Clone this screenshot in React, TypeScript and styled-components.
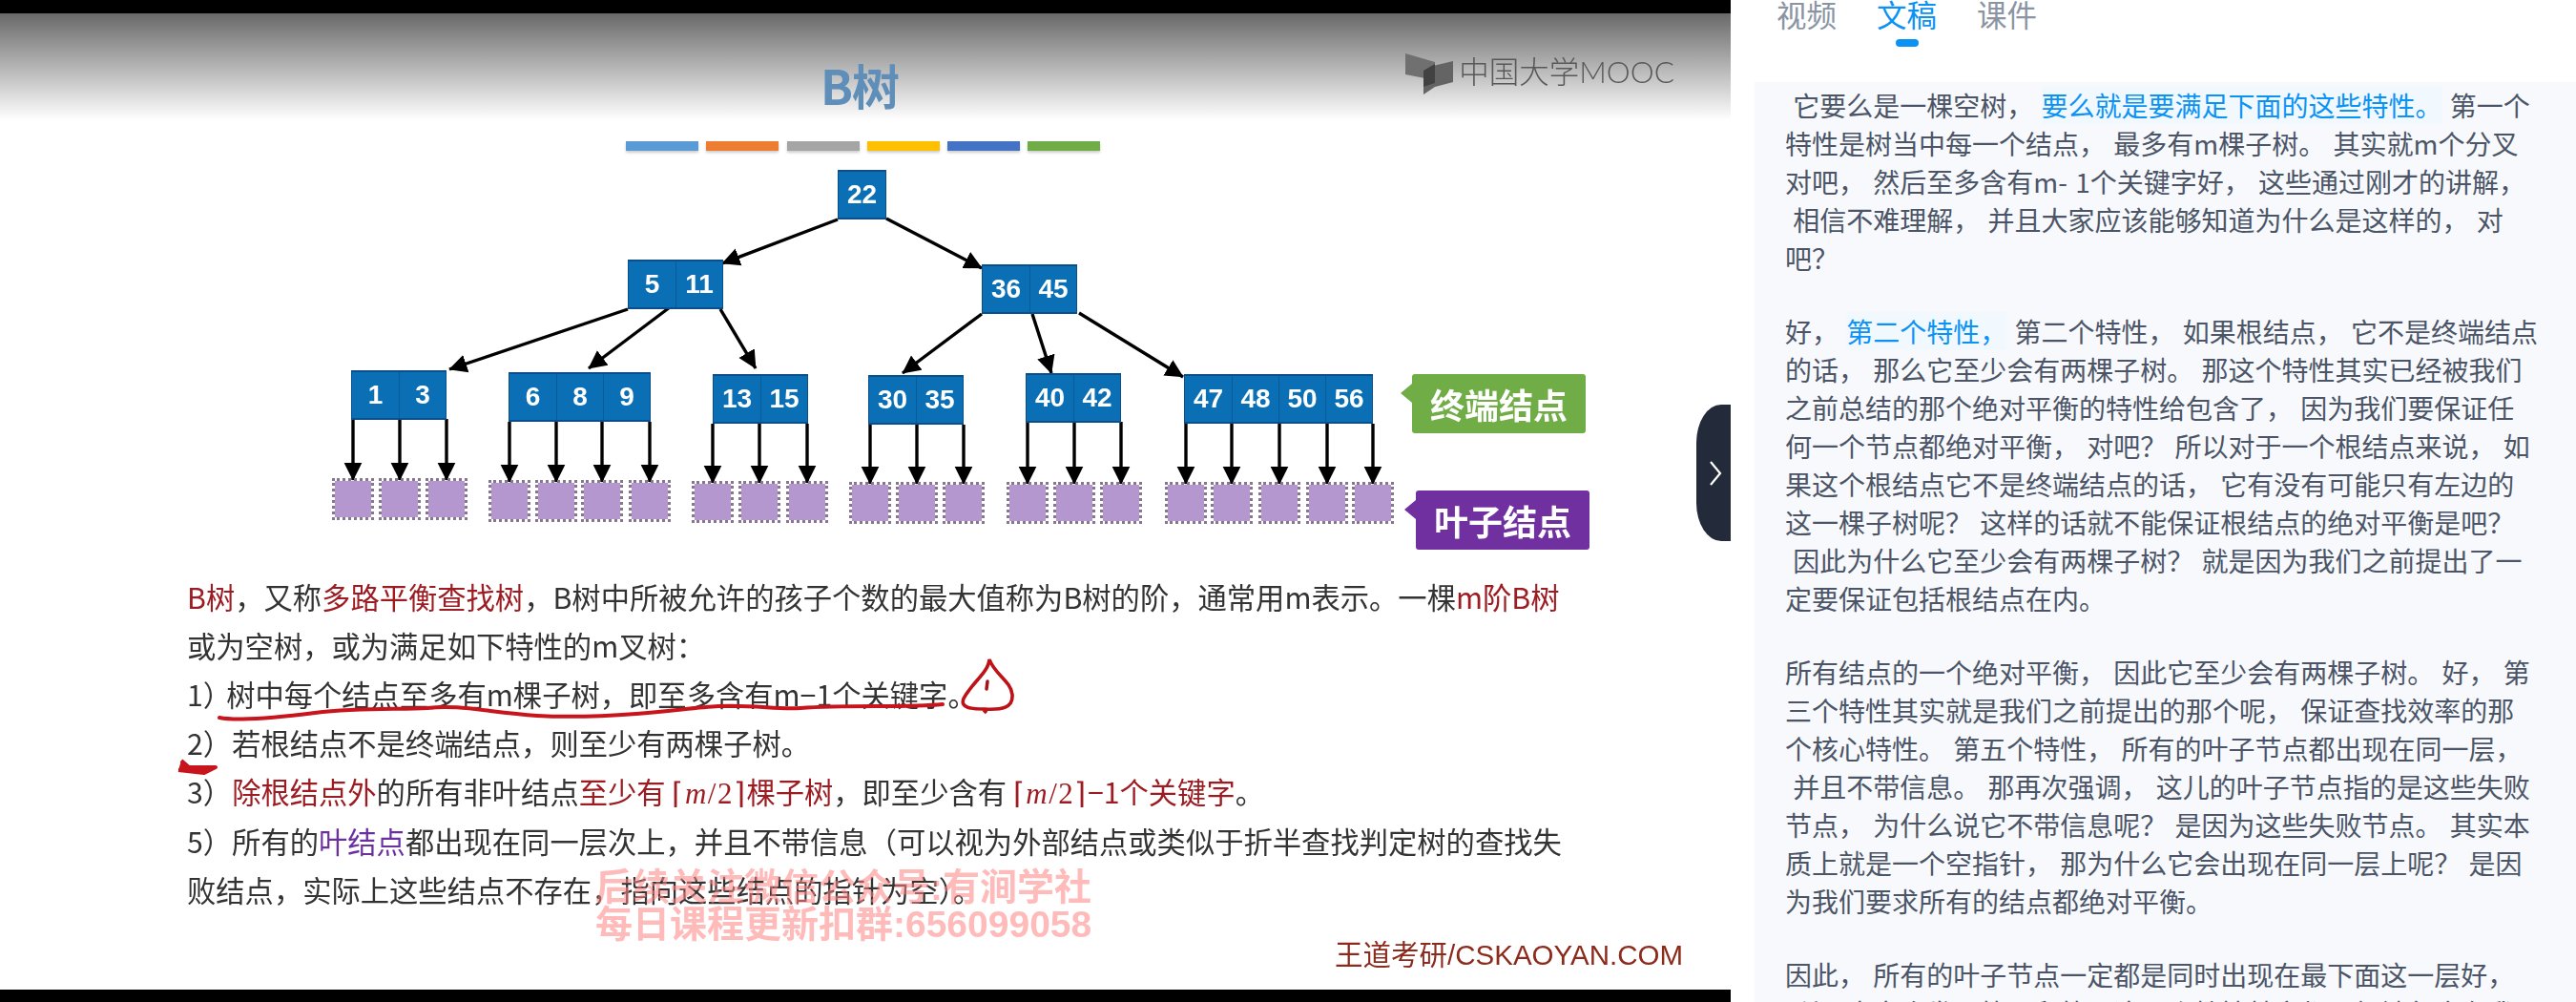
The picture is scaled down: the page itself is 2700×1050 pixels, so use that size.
import React from 'react';
import styled, { createGlobalStyle } from 'styled-components';

const CJK = '"Noto Sans CJK SC", "Noto Sans", sans-serif';
const LATIN_CJK = '"Liberation Sans", "Noto Sans CJK SC", sans-serif';

const GlobalStyle = createGlobalStyle`
    html, body {
        margin: 0;
        padding: 0;
        background: #fff;
    }
    #root {
        width: 2700px;
        height: 1050px;
        overflow: hidden;
    }
`;

interface TreeNode {
    x: number;
    y: number;
    keys: number[];
}

// the diagram canvas starts at page y = 170
const CANVAS_TOP = 170;

const nodes: TreeNode[] = [
    { x: 878, y: 177, keys: [22] },
    { x: 658, y: 271, keys: [5, 11] },
    { x: 1029, y: 276, keys: [36, 45] },
    { x: 368, y: 387, keys: [1, 3] },
    { x: 533, y: 389, keys: [6, 8, 9] },
    { x: 747, y: 391, keys: [13, 15] },
    { x: 910, y: 392, keys: [30, 35] },
    { x: 1075, y: 390, keys: [40, 42] },
    { x: 1241, y: 391, keys: [47, 48, 50, 56] },
];

// slanted arrows: x1, y1, x2, y2
const links = [
    [878, 229, 757, 275],
    [929, 228, 1029, 280],
    [658, 323, 471, 386],
    [706, 318, 617, 385],
    [755, 323, 792, 385],
    [1029, 328, 946, 390],
    [1082, 328, 1102, 390],
    [1131, 327, 1240, 394],
];

// groups of failure nodes hanging off the last level
const leafGroups = [
    { from: 438, top: 500, xs: [370, 419, 468] },
    { from: 441, top: 502, xs: [534, 583, 631, 681] },
    { from: 443, top: 503, xs: [747, 796, 846] },
    { from: 444, top: 504, xs: [912, 961, 1010] },
    { from: 441, top: 504, xs: [1077, 1126, 1175] },
    { from: 443, top: 504, xs: [1243, 1291, 1341, 1391, 1439] },
];

const barColors = ['#5b9bd5', '#ed7d31', '#a5a5a5', '#ffc000', '#4472c4', '#70ad47'];

function App() {
    return (
        <Page>
            <GlobalStyle />
            <VideoPane>
                <BlackBar />
                <Slide>
                    <SlideHeader>
                        <Title>B树</Title>
                        <Logo>
                            <svg width="50" height="43" viewBox="0 0 50 43">
                                <polygon points="0,0 31,9 31,28 0,22" fill="#707070" />
                                <polygon points="19,18 29,13 50,8 50,30 31,35 19,43" fill="#646464" />
                                <polygon points="19,18 31,11 31,31 19,35" fill="#424242" />
                            </svg>
                            <LogoText>中国大学MOOC</LogoText>
                        </Logo>
                    </SlideHeader>
                    <ColorBars>
                        {barColors.map(c => (
                            <ColorBar key={c} $color={c} />
                        ))}
                    </ColorBars>
                    <Diagram>
                        <ArrowLayer width="1814" height="430" viewBox={`0 ${CANVAS_TOP} 1814 430`}>
                            <defs>
                                <marker id="head" markerWidth="6" markerHeight="6" refX="5.4" refY="3" orient="auto">
                                    <path d="M0,0.2 L5.6,3 L0,5.8 Z" fill="#000" />
                                </marker>
                            </defs>
                            {links.map(([x1, y1, x2, y2]) => (
                                <line
                                    key={`${x1}-${x2}`}
                                    x1={x1}
                                    y1={y1}
                                    x2={x2}
                                    y2={y2}
                                    stroke="#000"
                                    strokeWidth="3.4"
                                    markerEnd="url(#head)"
                                />
                            ))}
                            {leafGroups.map(g =>
                                g.xs.map(x => (
                                    <line
                                        key={x}
                                        x1={x}
                                        y1={g.from}
                                        x2={x}
                                        y2={g.top + 2}
                                        stroke="#000"
                                        strokeWidth="3.4"
                                        markerEnd="url(#head)"
                                    />
                                ))
                            )}
                        </ArrowLayer>
                        {nodes.map(n => (
                            <Node key={n.keys[0]} $x={n.x} $y={n.y - CANVAS_TOP}>
                                {n.keys.map(k => (
                                    <Cell key={k}>{k}</Cell>
                                ))}
                            </Node>
                        ))}
                        {leafGroups.map(g =>
                            g.xs.map(x => <Leaf key={x} $x={x - 22} $y={g.top - CANVAS_TOP} />)
                        )}
                        <Callout $x={1480} $y={391 - CANVAS_TOP} $color="#70ad47">
                            终端结点
                        </Callout>
                        <Callout $x={1484} $y={513 - CANVAS_TOP} $color="#7030a0">
                            叶子结点
                        </Callout>
                    </Diagram>
                    <SlideText>
                        <Red>B树</Red>，又称<Red>多路平衡查找树</Red>，B树中所被允许的孩子个数的最大值称为B树的阶，通常用m表示。一棵
                        <Red>m阶B树</Red>
                        <br />
                        或为空树，或为满足如下特性的m叉树：
                        <br />
                        <TightMark>1）</TightMark>树中每个结点至多有m棵子树，即至多含有m−1个关键字。
                        <br />
                        2）若根结点不是终端结点，则至少有两棵子树。
                        <br />
                        3）<Red>除根结点外</Red>的所有非叶结点<Red>至少有 <Formula>⌈<i>m</i>/2⌉</Formula>棵子树</Red>，即至少含有{' '}
                        <Red><Formula>⌈<i>m</i>/2⌉</Formula>−1个关键字</Red>。
                        <br />
                        5）所有的<Purple>叶结点</Purple>都出现在同一层次上，并且不带信息（可以视为外部结点或类似于折半查找判定树的查找失
                        <br />
                        败结点，实际上这些结点不存在，指向这些结点的指针为空）。
                    </SlideText>
                    <Credit>王道考研/CSKAOYAN.COM</Credit>
                    <Watermark>
                        后续关注微信公众号:有涧学社
                        <br />
                        每日课程更新扣群:656099058
                    </Watermark>
                </Slide>
                <BlackBar />
                <InkLayer width="1814" height="1050" viewBox="0 0 1814 1050">
                    <path
                        d="M230 752 C 250 756 290 752 330 747 C 380 741 420 744 448 742 C 480 738 510 746 563 750 C 600 752 640 750 667 748 C 700 746 730 741 753 740 C 790 738 815 744 839 742 C 890 738 950 742 988 738"
                        fill="none"
                        stroke="#c8141c"
                        strokeWidth="4"
                        strokeLinecap="round"
                    />
                    <path
                        d="M1037 691 C 1036 705 1018 716 1010 732 C 1006 742 1018 743 1032 743 C 1050 744 1062 742 1061 728 C 1060 714 1042 706 1037 691 Z"
                        fill="none"
                        stroke="#bf1118"
                        strokeWidth="3.6"
                    />
                    <path d="M1035 714 L1034 722" stroke="#a5141a" strokeWidth="3.5" strokeLinecap="round" />
                    <path d="M1031 744 L1034 747" stroke="#bf1118" strokeWidth="3.5" />
                    <path
                        d="M190 797 L198 804 L226 804 L214 810 L187 807"
                        fill="#c8141c"
                        stroke="#c8141c"
                        strokeWidth="4"
                        strokeLinejoin="round"
                    />
                </InkLayer>
                <CollapseButton>
                    <svg width="14" height="26" viewBox="0 0 14 26">
                        <path d="M2 1 L12 13 L2 25" fill="none" stroke="#fff" strokeWidth="2.2" />
                    </svg>
                </CollapseButton>
            </VideoPane>
            <SidePanel>
                <Tabs>
                    <Tab>视频</Tab>
                    <Tab $active>文稿</Tab>
                    <Tab>课件</Tab>
                </Tabs>
                <Transcript>
                    <Paragraph>
                        {' 它要么是一棵空树， '}
                        <Highlight>要么就是要满足下面的这些特性。</Highlight>
                        {' 第一个\n特性是树当中每一个结点， 最多有m棵子树。 其实就m个分叉\n对吧， 然后至多含有m- 1个关键字好， 这些通过刚才的讲解，\n 相信不难理解， 并且大家应该能够知道为什么是这样的， 对\n吧？'}
                    </Paragraph>
                    <Paragraph>
                        {'好， '}
                        <Highlight>第二个特性，</Highlight>
                        {' 第二个特性， 如果根结点， 它不是终端结点\n的话， 那么它至少会有两棵子树。 那这个特性其实已经被我们\n之前总结的那个绝对平衡的特性给包含了， 因为我们要保证任\n何一个节点都绝对平衡， 对吧？ 所以对于一个根结点来说， 如\n果这个根结点它不是终端结点的话， 它有没有可能只有左边的\n这一棵子树呢？ 这样的话就不能保证根结点的绝对平衡是吧？\n 因此为什么它至少会有两棵子树？ 就是因为我们之前提出了一\n定要保证包括根结点在内。'}
                    </Paragraph>
                    <Paragraph>
                        {'所有结点的一个绝对平衡， 因此它至少会有两棵子树。 好， 第\n三个特性其实就是我们之前提出的那个呢， 保证查找效率的那\n个核心特性。 第五个特性， 所有的叶子节点都出现在同一层，\n 并且不带信息。 那再次强调， 这儿的叶子节点指的是这些失败\n节点， 为什么说它不带信息呢？ 是因为这些失败节点。 其实本\n质上就是一个空指针， 那为什么它会出现在同一层上呢？ 是因\n为我们要求所有的结点都绝对平衡。'}
                    </Paragraph>
                    <Paragraph>
                        {'因此， 所有的叶子节点一定都是同时出现在最下面这一层好，\n 所以大家会发现第二和第五这两个特性其实都已经被包含在我'}
                    </Paragraph>
                </Transcript>
            </SidePanel>
        </Page>
    );
}

const Page = styled.div`
    display: flex;
    width: 2700px;
    height: 1050px;
    overflow: hidden;
    background: #fff;
`;

const VideoPane = styled.div`
    position: relative;
    flex: 0 0 1814px;
    display: flex;
    flex-direction: column;
    height: 1050px;
`;

const BlackBar = styled.div`
    flex: 0 0 13.5px;
    background: #000;
    position: relative;
    z-index: 1;
`;

const Slide = styled.div`
    position: relative;
    flex: 1;
    overflow: hidden;
    background: #fff;
    font-family: ${CJK};
    color: #333;
    filter: blur(0.5px);
`;

const SlideHeader = styled.div`
    height: 112px;
    padding: 42px 59px 0 860px;
    box-sizing: border-box;
    display: flex;
    justify-content: space-between;
    align-items: flex-start;
    background: linear-gradient(#696969, #fff);
`;

const Title = styled.div`
    font-size: 50px;
    line-height: 64px;
    font-weight: 700;
    color: #5f8fb9;
    letter-spacing: -1px;
`;

const Logo = styled.div`
    display: flex;
    align-items: flex-start;
    gap: 6px;
`;

const LogoText = styled.span`
    font-size: 31.5px;
    line-height: 38px;
    font-family: "Lato", ${CJK};
    font-weight: 300;
    color: #585858;
    white-space: nowrap;
`;

const ColorBars = styled.div`
    display: flex;
    gap: 8.3px;
    height: 10px;
    margin-top: 22px;
    padding-left: 656px;
`;

const ColorBar = styled.div<{ $color: string }>`
    width: 76px;
    background: ${props => props.$color};
    box-shadow: 0 2px 3px rgba(0, 0, 0, 0.2);
`;

const Diagram = styled.div`
    position: relative;
    height: 429px;
    margin-top: 13px;
`;

const ArrowLayer = styled.svg`
    position: absolute;
    top: 0;
    left: 0;
`;

const Node = styled.div<{ $x: number; $y: number }>`
    position: absolute;
    left: ${props => props.$x}px;
    top: ${props => props.$y}px;
    display: flex;
    height: 52px;
    box-sizing: border-box;
    background: #0a6fb5;
    border: 1.5px solid #0a4e8c;
    border-top-width: 2px;
    border-bottom-width: 2px;
`;

const Cell = styled.div`
    width: 49px;
    box-sizing: border-box;
    display: flex;
    align-items: center;
    justify-content: center;
    font-family: "Liberation Sans", sans-serif;
    font-weight: 700;
    font-size: 28px;
    color: #fff;
    & + & {
        border-left: 1.5px solid #0a5a98;
    }
`;

const Leaf = styled.div<{ $x: number; $y: number }>`
    position: absolute;
    left: ${props => props.$x}px;
    top: ${props => props.$y}px;
    width: 44px;
    height: 44px;
    box-sizing: border-box;
    background: #b597cf;
    background-clip: padding-box;
    border: 3px dotted #86768f;
`;

const Callout = styled.div<{ $x: number; $y: number; $color: string }>`
    position: absolute;
    left: ${props => props.$x}px;
    top: ${props => props.$y}px;
    width: 182px;
    height: 62px;
    display: flex;
    align-items: center;
    justify-content: center;
    border-radius: 3px;
    background: ${props => props.$color};
    color: #fff;
    font-size: 36px;
    font-weight: 700;
    &::before {
        content: '';
        position: absolute;
        left: -12px;
        top: 10px;
        border-style: solid;
        border-width: 10px 12px 10px 0;
        border-color: transparent ${props => props.$color} transparent transparent;
    }
`;

const SlideText = styled.div`
    padding-left: 196px;
    font-size: 30.3px;
    line-height: 51.2px;
    white-space: nowrap;
    color: #333;
`;

const TightMark = styled.span`
    margin-right: -6px;
`;

const Red = styled.span`
    color: #9c1c22;
`;

const Purple = styled.span`
    color: #6b2fa0;
`;

const Formula = styled.span`
    font-family: "Liberation Serif", serif;
    font-size: 31px;
    line-height: 0;
    letter-spacing: 1.5px;
    font-weight: 300;
`;

const Credit = styled.div`
    margin-top: 26px;
    padding-right: 50px;
    text-align: right;
    font-family: ${LATIN_CJK};
    font-size: 29.5px;
    line-height: 34px;
    color: #8c2a1c;
`;

const Watermark = styled.div`
    position: absolute;
    left: 624px;
    top: 896px;
    font-family: ${LATIN_CJK};
    font-size: 39px;
    line-height: 39px;
    font-weight: 700;
    color: rgba(255, 130, 130, 0.55);
    white-space: nowrap;
`;

const InkLayer = styled.svg`
    position: absolute;
    top: 0;
    left: 0;
    pointer-events: none;
`;

const CollapseButton = styled.div`
    position: absolute;
    right: 0;
    top: 424px;
    width: 36px;
    height: 143px;
    display: flex;
    align-items: center;
    justify-content: center;
    padding-left: 3px;
    box-sizing: border-box;
    background: #232a39;
    border-radius: 26px 0 0 26px / 40px 0 0 40px;
`;

const SidePanel = styled.div`
    flex: 1;
    min-width: 0;
    display: flex;
    flex-direction: column;
    padding-left: 25px;
    font-family: ${CJK};
`;

const Tabs = styled.div`
    flex: 0 0 86px;
    display: flex;
    gap: 42px;
    padding-left: 23px;
    box-sizing: border-box;
`;

const Tab = styled.div<{ $active?: boolean }>`
    position: relative;
    height: 32px;
    font-size: 31.5px;
    line-height: 32px;
    margin-top: -2px;
    color: ${props => (props.$active ? '#0a93f5' : '#8a94a3')};
    &::after {
        content: '';
        display: ${props => (props.$active ? 'block' : 'none')};
        position: absolute;
        left: 19.5px;
        top: 43px;
        width: 24px;
        height: 8px;
        border-radius: 4px;
        background: #0a93f5;
    }
`;

const Transcript = styled.div`
    flex: 1;
    overflow: hidden;
    padding: 4px 0 0 32px;
    background: #f7f9fc;
    color: #4b5567;
    font-size: 28px;
    line-height: 40px;
    word-spacing: 2px;
`;

const Paragraph = styled.p`
    margin: 0 0 37px;
    white-space: pre;
`;

const Highlight = styled.span`
    color: #0a93f5;
    background: #f1f8fe;
`;

export default App;
